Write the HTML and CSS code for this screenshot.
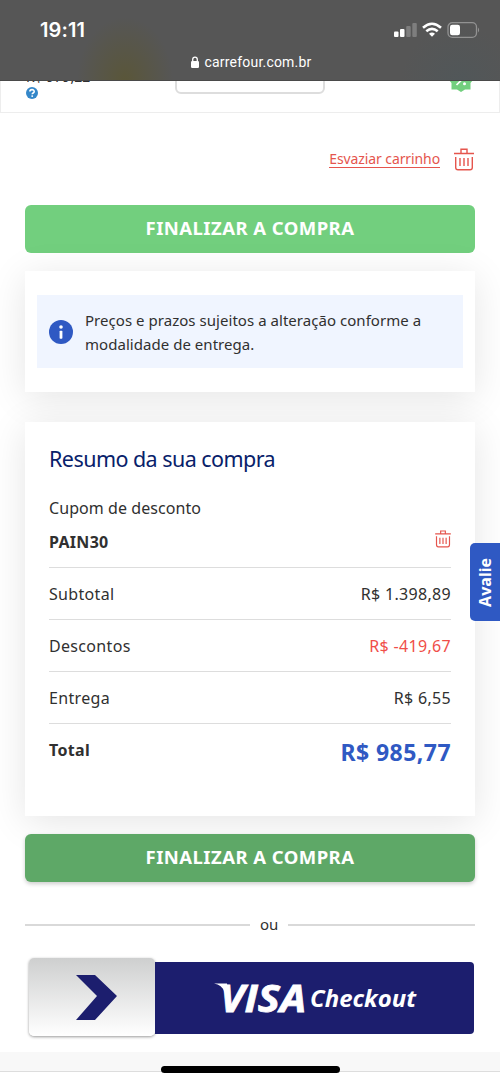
FILE: index.html
```html
<!DOCTYPE html>
<html lang="pt-BR">
<head>
<meta charset="utf-8">
<title>Carrefour - Carrinho</title>
<link rel="stylesheet" href="styles.css">
</head>
<body>
<div class="screen">
<header class="browser-bar">
  <div class="status">
    <span class="clock">19:11</span>
    <svg class="status-icons" viewBox="0 0 88 18" width="88" height="18">
      <rect x="1" y="10.500" width="4.500" height="5.500" rx="1" fill="#fff"/>
      <rect x="7" y="8" width="4.500" height="8" rx="1" fill="#fff"/>
      <rect x="13.200" y="5" width="4.500" height="11" rx="1" fill="#7e7e7e"/>
      <rect x="19.300" y="2" width="4.500" height="14" rx="1" fill="#7e7e7e"/>
      <g fill="none" stroke="#fff" stroke-width="2.600"><path d="M30 6.700Q39 -1.200 48 6.700"/><path d="M33.300 10.200Q39 5.400 44.700 10.200"/></g>
      <path d="M36 12.700Q39 10.200 42 12.700L39 15.800Z" fill="#fff"/>
      <rect x="55" y="1.700" width="28.500" height="14.600" rx="4.300" fill="none" stroke="#929292" stroke-width="1.300"/>
      <rect x="57" y="3.800" width="10" height="10.500" rx="2.200" fill="#fff"/>
      <path d="M85 6.500q2.300 2.500 0 5z" fill="#929292"/>
    </svg>
  </div>
  <div class="address">
    <svg viewBox="0 0 8 12" width="8" height="12"><rect y="5" width="8" height="7" rx="1.200" fill="#fff"/><path d="M1.700 5.500V3.400a2.300 2.300 0 0 1 4.600 0V5.500" fill="none" stroke="#fff" stroke-width="1.300"/></svg>
    <span>carrefour.com.br</span>
  </div>
</header>
<section class="item-strip">
  <div class="unit-price"><span class="old-price">R$ 979,22</span>
    <svg viewBox="0 0 12 12" width="12" height="12"><circle cx="6" cy="6" r="6" fill="#3487c9"/><path d="M3.900 4.600C3.900 1.900 8.200 2 8.200 4.400C8.200 6 6.200 5.900 6.200 7.200" fill="none" stroke="#fff" stroke-width="1.600"/><circle cx="6.200" cy="9.100" r=".95" fill="#fff"/></svg>
  </div>
  <div class="quantity"></div>
  <svg class="discount-seal" viewBox="0 0 24 24" width="24" height="24"><path d="M12 0L15 3L20 2L21 7L24 12L21.500 15V21.500H16L12 24L8 21.500H2.500V15L0 12L3 7L4 2L9 3Z" fill="#72cf7e"/><path d="M7.500 17L15.500 9" stroke="#fff" stroke-width="1.700"/><circle cx="15.500" cy="15.800" r="1.500" fill="#fff"/><circle cx="8" cy="8" r="1.600" fill="#fff"/></svg>
</section>
<main class="cart">
  <div class="clear-row">
    <a class="clear-link">Esvaziar carrinho</a>
    <svg class="trash" viewBox="0 0 20 23" width="20" height="23"><path d="M0 5.500H20M7 5V1.300H13V5M1.700 9V19.500Q1.700 21.800 4 21.800H16Q18.300 21.800 18.300 19.500V9M6 10V18M10 10V18M14 10V18"/></svg>
  </div>
  <button class="buy">FINALIZAR A COMPRA</button>
  <section class="card notice-card">
    <div class="notice">
      <svg viewBox="0 0 24 24" width="24" height="24"><circle cx="12" cy="12" r="12" fill="#2f59c3"/><circle cx="12" cy="7" r="1.800" fill="#fff"/><rect x="10.600" y="10.700" width="2.800" height="8" rx=".7" fill="#fff"/></svg>
      <p>Preços e prazos sujeitos a alteração conforme a<br>modalidade de entrega.</p>
    </div>
  </section>
  <section class="card summary">
    <h1>Resumo da sua compra</h1>
    <div class="coupon-label">Cupom de desconto</div>
    <div class="coupon"><b>PAIN30</b>
      <svg class="trash small" viewBox="0 0 20 23" width="16" height="18"><path d="M0 5H20M7 4.500V1.300H13V4.500M1.700 8V18.500Q1.700 21.500 4 21.500H16Q18.300 21.500 18.300 18.500V8M6 10V18M10 10V18M14 10V18"/></svg>
    </div>
    <div class="line"><span>Subtotal</span><span>R$ 1.398,89</span></div>
    <div class="line"><span>Descontos</span><span class="discount">R$ -419,67</span></div>
    <div class="line"><span>Entrega</span><span>R$ 6,55</span></div>
    <div class="line total"><b>Total</b><strong>R$ 985,77</strong></div>
  </section>
  <button class="buy pressed">FINALIZAR A COMPRA</button>
  <div class="or"><span>ou</span></div>
  <div class="visa">
    <div class="visa-handle"><svg viewBox="0 0 41 45" width="41" height="45"><path d="M0 0H19L41 21L19 45H0L21 21Z" fill="#1c1e6e"/></svg></div>
    <div class="visa-body">
      <svg viewBox="0 0 204 50" width="204" height="50">
        <path d="M0 3.600H13L16 26L10.500 12Q8 5 0 3.600Z" fill="#fff"/>
        <text class="visa-word" x="6" y="32" textLength="86" lengthAdjust="spacingAndGlyphs">VISA</text>
        <text class="checkout-word" x="96" y="27.300" textLength="106" lengthAdjust="spacingAndGlyphs">Checkout</text>
      </svg>
    </div>
  </div>
</main>
<footer class="page-end"><i class="home-bar"></i></footer>
<aside class="feedback"><span>Avalie</span></aside>
</div>
</body>
</html>
```
FILE: styles.css
```css
* { box-sizing: border-box; }
body { margin: 0; background: #fff; color: #303030; font: 16px/24px "Noto Sans", sans-serif; }
.screen { position: relative; width: 500px; height: 1082px; overflow: hidden; display: flex; flex-direction: column; }
svg { display: block; flex: none; }
.browser-bar { height: 81px; flex: none; padding-top: 18px; color: #fff; font-family: Inter, "Liberation Sans", sans-serif; border-bottom: 1px solid #4a4a4a;
  background: radial-gradient(ellipse 48px 64px at 125px 81px, #5a5639, transparent), radial-gradient(ellipse 60px 55px at 460px 81px, #515759, transparent), #565656; }
.status { height: 24px; display: flex; justify-content: space-between; align-items: center; padding: 0 19px 0 40px; }
.clock { font-size: 20px; font-weight: 600; letter-spacing: .1px; }
.address { height: 24px; margin-top: 8px; display: flex; justify-content: center; align-items: center; gap: 6px; padding-left: 2px; font: 14px/24px Roboto, sans-serif; letter-spacing: .2px; }
.item-strip { height: 32px; flex: none; display: flex; align-items: flex-start; overflow: hidden; border: 1px solid #ededed; border-top: 0; padding-left: 25px; }
.unit-price { width: 149px; margin-top: -14px; }
.old-price { display: block; height: 20px; font-size: 14px; line-height: 20px; }
.quantity { width: 150px; height: 38px; margin-top: -25px; border: 2px solid #ddd; border-radius: 6px; }
.discount-seal { margin: -13px 0 0 124px; }
.cart { padding: 0 25px; flex: none; height: 939px; }
.clear-row { height: 92px; display: flex; align-items: center; justify-content: flex-end; gap: 14px; padding: 2px 1px 0 0; color: #e5554d; }
.clear-link { font-size: 14px; letter-spacing: -.1px; line-height: 16px; border-bottom: 1px solid; height: 17px; margin-top: -2px; }
.trash { fill: none; stroke: #e5554d; stroke-width: 1.400; margin-top: -1px; }
.buy { display: block; width: 450px; height: 48px; border: 0; border-radius: 6px; padding: 0 0 2px; color: #fff; background: #72cf7e; font: bold 18.500px/46px "Noto Sans", sans-serif; letter-spacing: .45px; }
.buy.pressed { background: #5ea867; margin-top: 18px; position: relative; box-shadow: 0 2px 4px #0003; }
.card { background: #fff; box-shadow: 0 6px 36px rgba(0,0,0,.105); }
.notice-card { height: 121px; margin-top: 18px; padding: 24px 12px; }
.notice { height: 73px; background: #f0f5ff; display: flex; align-items: center; gap: 12px; padding-left: 12px; white-space: nowrap; }
.notice p { margin: 0; font-size: 15px; letter-spacing: .04px; }
.summary { position: relative; height: 394px; margin-top: 30px; padding: 22px 24px; }
h1 { margin: -1px 0 0; color: #08216a; font-size: 21.500px; line-height: 32px; font-weight: 400; letter-spacing: -.55px; }
.coupon-label { margin-top: 21px; letter-spacing: .07px; }
.coupon { height: 48px; display: flex; justify-content: space-between; align-items: flex-start; padding-top: 10px; border-bottom: 1px solid #ddd; }
.coupon b { letter-spacing: .3px; }
.small { margin-top: 0; stroke-width: 1.500; }
.line { height: 52px; display: flex; align-items: center; justify-content: space-between; border-bottom: 1px solid #ddd; letter-spacing: .32px; }
.total { border: 0; padding-bottom: 1px; }
.total strong { color: #2f59c3; font-size: 23px; margin-top: 4px; letter-spacing: .45px; }
.discount { color: #f04e49; }
.or { height: 76px; display: flex; align-items: center; gap: 10px; font-size: 15px; padding-top: 9px; }
.or::before, .or::after { content: ""; flex: none; height: 2px; background: #d9d9d9; width: 225px; }
.or::after { flex: 1; }
.or span { line-height: 24px; margin-top: -2px; letter-spacing: -.2px; }
.visa { display: flex; align-items: center; padding-left: 4px; height: 78px; }
.visa-handle { width: 126px; height: 78px; border-radius: 5px; background: linear-gradient(#cecfcf, #fff); box-shadow: 0 1px 3px #0006; display: flex; align-items: center; padding: 1px 0 0 47px; }
.visa-body { width: 319px; height: 72px; margin-top: 1px; background: #1c1e6e; border-radius: 0 4px 4px 0; padding: 18px 0 0 59px; }
.visa-word { font: italic bold 38px "Open Sans", sans-serif; fill: #fff; stroke: #fff; stroke-width: .800; }
.checkout-word { font: italic bold 23px "Open Sans", sans-serif; fill: #fff; }
.page-end { flex: none; height: 20px; background: #f8f8f8; border-bottom: 1px solid #ddd; display: flex; justify-content: center; }
.home-bar { width: 179px; height: 7px; border-radius: 4px; background: #000; margin-top: 14px; flex: none; }
.feedback { position: absolute; left: 470px; top: 543px; width: 30px; height: 78px; border-radius: 5px 0 0 5px; background: #2f59c3; color: #fff; display: flex; align-items: center; justify-content: center; font-weight: bold; box-shadow: 0 0 1px #fff; }
.feedback span { writing-mode: vertical-rl; transform: rotate(180deg); font-size: 16px; }
```
